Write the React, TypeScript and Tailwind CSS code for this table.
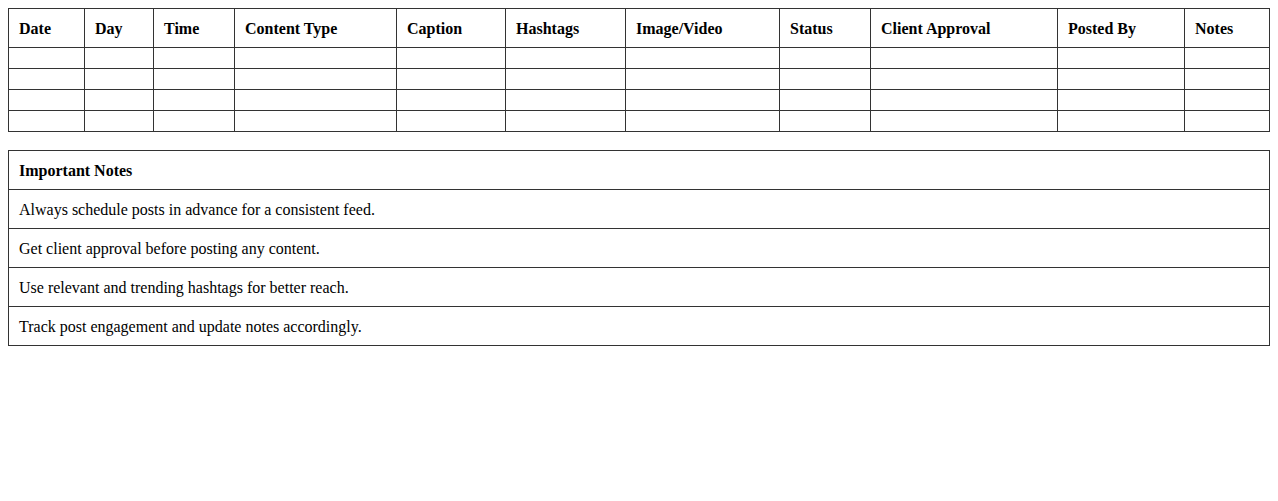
const columns = [
  { label: 'Date', w: 'w-[76px]' },
  { label: 'Day', w: 'w-[69px]' },
  { label: 'Time', w: 'w-[81px]' },
  { label: 'Content Type', w: 'w-[162px]' },
  { label: 'Caption', w: 'w-[109px]' },
  { label: 'Hashtags', w: 'w-[120px]' },
  { label: 'Image/Video', w: 'w-[154px]' },
  { label: 'Status', w: 'w-[91px]' },
  { label: 'Client Approval', w: 'w-[187px]' },
  { label: 'Posted By', w: 'w-[127px]' },
  { label: 'Notes', w: 'w-[85px]' },
]

const notes = [
  'Always schedule posts in advance for a consistent feed.',
  'Get client approval before posting any content.',
  'Use relevant and trending hashtags for better reach.',
  'Track post engagement and update notes accordingly.',
]

export default function App() {
  return (
    <div className="p-2 bg-white text-black text-base leading-[18px] font-['Liberation_Serif','Times_New_Roman',serif]">
      <table className="w-full table-fixed border-collapse mb-[18px]">
        <colgroup>
          {columns.map((c) => (
            <col key={c.label} className={c.w} />
          ))}
        </colgroup>
        <thead>
          <tr>
            {columns.map((c) => (
              <th key={c.label} className="border border-[#333] px-[10px] pt-[11px] pb-[9px] text-left font-bold">
                {c.label}
              </th>
            ))}
          </tr>
        </thead>
        <tbody>
          {[0, 1, 2, 3].map((r) => (
            <tr key={r}>
              {columns.map((c) => (
                <td key={c.label} className="border border-[#333] p-[10px] h-[21px]"></td>
              ))}
            </tr>
          ))}
        </tbody>
      </table>

      <table className="w-full border-collapse">
        <thead>
          <tr>
            <th className="border border-[#333] px-[10px] pt-[11px] pb-[9px] text-left font-bold">Important Notes</th>
          </tr>
        </thead>
        <tbody>
          {notes.map((n) => (
            <tr key={n}>
              <td className="border border-[#333] px-[10px] pt-[11px] pb-[9px]">{n}</td>
            </tr>
          ))}
        </tbody>
      </table>
    </div>
  )
}
